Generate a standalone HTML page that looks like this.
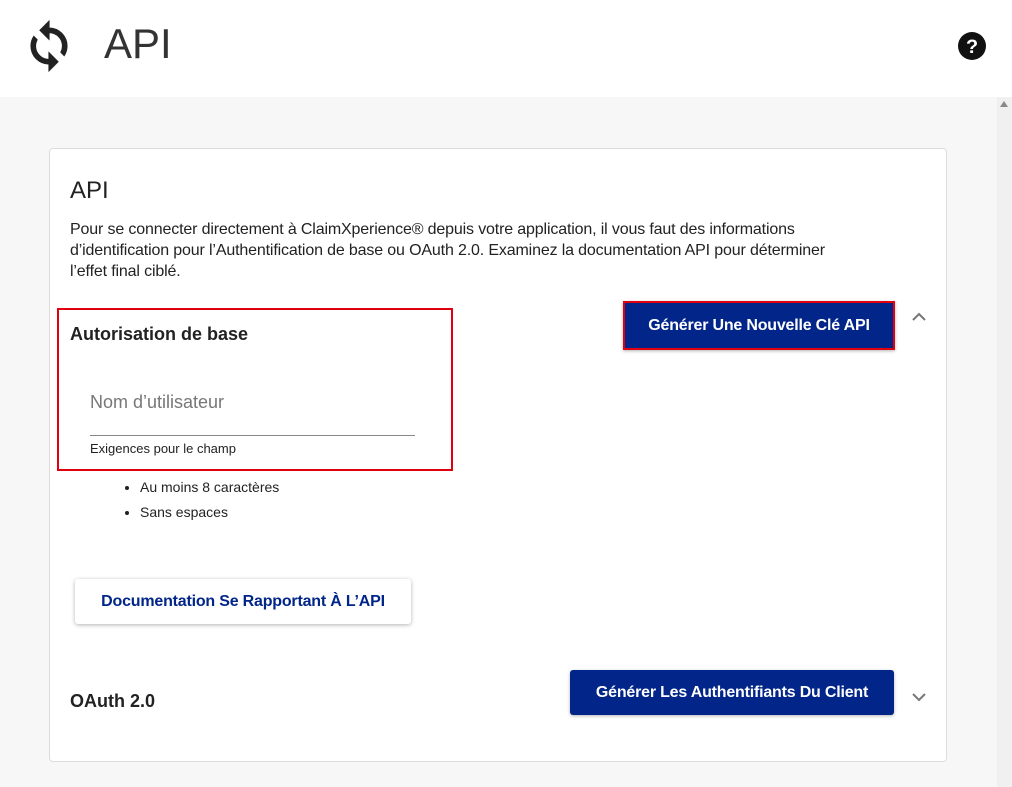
<!DOCTYPE html>
<html><head><style>
body{margin:0;width:1012px;height:787px;background:#f7f7f7;font-family:"Liberation Sans",sans-serif;position:relative;overflow:hidden;color:#222}
.hdr{position:absolute;left:0;top:0;width:1012px;height:97px;background:#fff}
.sb{position:absolute;right:0;top:97px;width:15px;height:690px;background:#f0f0f0}
.card{position:absolute;left:49px;top:148px;width:896px;height:612px;background:#fff;border:1px solid #ddd;border-radius:4px}
.abs{position:absolute}
.btn{position:absolute;background:#012588;color:#fff;font-weight:bold;font-size:16px;text-align:center;border-radius:3px;box-shadow:0 1px 3px rgba(0,0,0,.3);letter-spacing:-0.2px}
</style></head><body>
<div class="hdr">
<svg class="abs" style="left:22px;top:18px" width="54" height="56" viewBox="0 0 24 24"><path fill="#222" stroke="#222" stroke-width="0.5" d="M12 4V1L8 5l4 4V6c3.31 0 6 2.69 6 6 0 1.01-.25 1.970-.7 2.8l1.46 1.46C19.54 15.03 20 13.57 20 12c0-4.42-3.58-8-8-8zm0 14c-3.31 0-6-2.69-6-6 0-1.01.25-1.97.7-2.8L5.24 7.74C4.46 8.97 4 10.43 4 12c0 4.42 3.58 8 8 8v3l4-4-4-4v3z"/></svg>
<div class="abs" style="left:104px;top:20px;font-size:42px;font-weight:300;color:#333">API</div>
<svg class="abs" style="left:958px;top:32px" width="28" height="28" viewBox="0 0 24 24"><circle cx="12" cy="12" r="12" fill="#111"/><text x="12" y="18" font-size="17" font-weight="bold" text-anchor="middle" fill="#fff" font-family="Liberation Sans">?</text></svg>
</div>
<div class="sb"><div class="abs" style="left:3px;top:4px;width:0;height:0;border-left:4px solid transparent;border-right:4px solid transparent;border-bottom:6px solid #888"></div></div>
<div class="card">
<div class="abs" style="left:20px;top:28px;font-size:24px">API</div>
<div class="abs" style="left:20px;top:70px;width:830px;font-size:16px;line-height:21px;color:#222;letter-spacing:-0.15px">Pour se connecter directement à ClaimXperience® depuis votre application, il vous faut des informations<br>d’identification pour l’Authentification de base ou OAuth 2.0. Examinez la documentation API pour déterminer<br>l’effet final ciblé.</div>
<div class="abs" style="left:7px;top:159px;width:392px;height:159px;border:2px solid #e00010"></div>
<div class="abs" style="left:20px;top:175px;font-size:18px;font-weight:bold">Autorisation de base</div>
<div class="abs" style="left:40px;top:243px;font-size:18px;color:#777">Nom d’utilisateur</div>
<div class="abs" style="left:40px;top:286px;width:325px;height:1px;background:#888"></div>
<div class="abs" style="left:40px;top:292px;font-size:13px">Exigences pour le champ</div>
<ul class="abs" style="left:70px;top:326px;margin:0;padding-left:20px;font-size:14px;line-height:25px"><li>Au moins 8 caractères</li><li>Sans espaces</li></ul>
<div class="btn" style="left:573px;top:152px;width:268px;height:45px;line-height:45px;border:2px solid #e00010;border-radius:0">Générer Une Nouvelle Clé API</div>
<svg class="abs" style="left:861px;top:162px" width="16" height="12" viewBox="0 0 16 12"><path d="M2 9l6-6 6 6" stroke="#777" stroke-width="2" fill="none"/></svg>
<div class="abs" style="left:25px;top:430px;width:336px;height:45px;line-height:45px;background:#fff;color:#012588;font-weight:bold;font-size:16px;text-align:center;border-radius:3px;box-shadow:0 1px 4px rgba(0,0,0,.3);letter-spacing:-0.2px">Documentation Se Rapportant À L’API</div>
<div class="abs" style="left:20px;top:542px;font-size:18px;font-weight:bold">OAuth 2.0</div>
<div class="btn" style="left:520px;top:521px;width:324px;height:45px;line-height:45px">Générer Les Authentifiants Du Client</div>
<svg class="abs" style="left:861px;top:542px" width="16" height="12" viewBox="0 0 16 12"><path d="M2 3l6 6 6-6" stroke="#777" stroke-width="2" fill="none"/></svg>
</div>
</body></html>
